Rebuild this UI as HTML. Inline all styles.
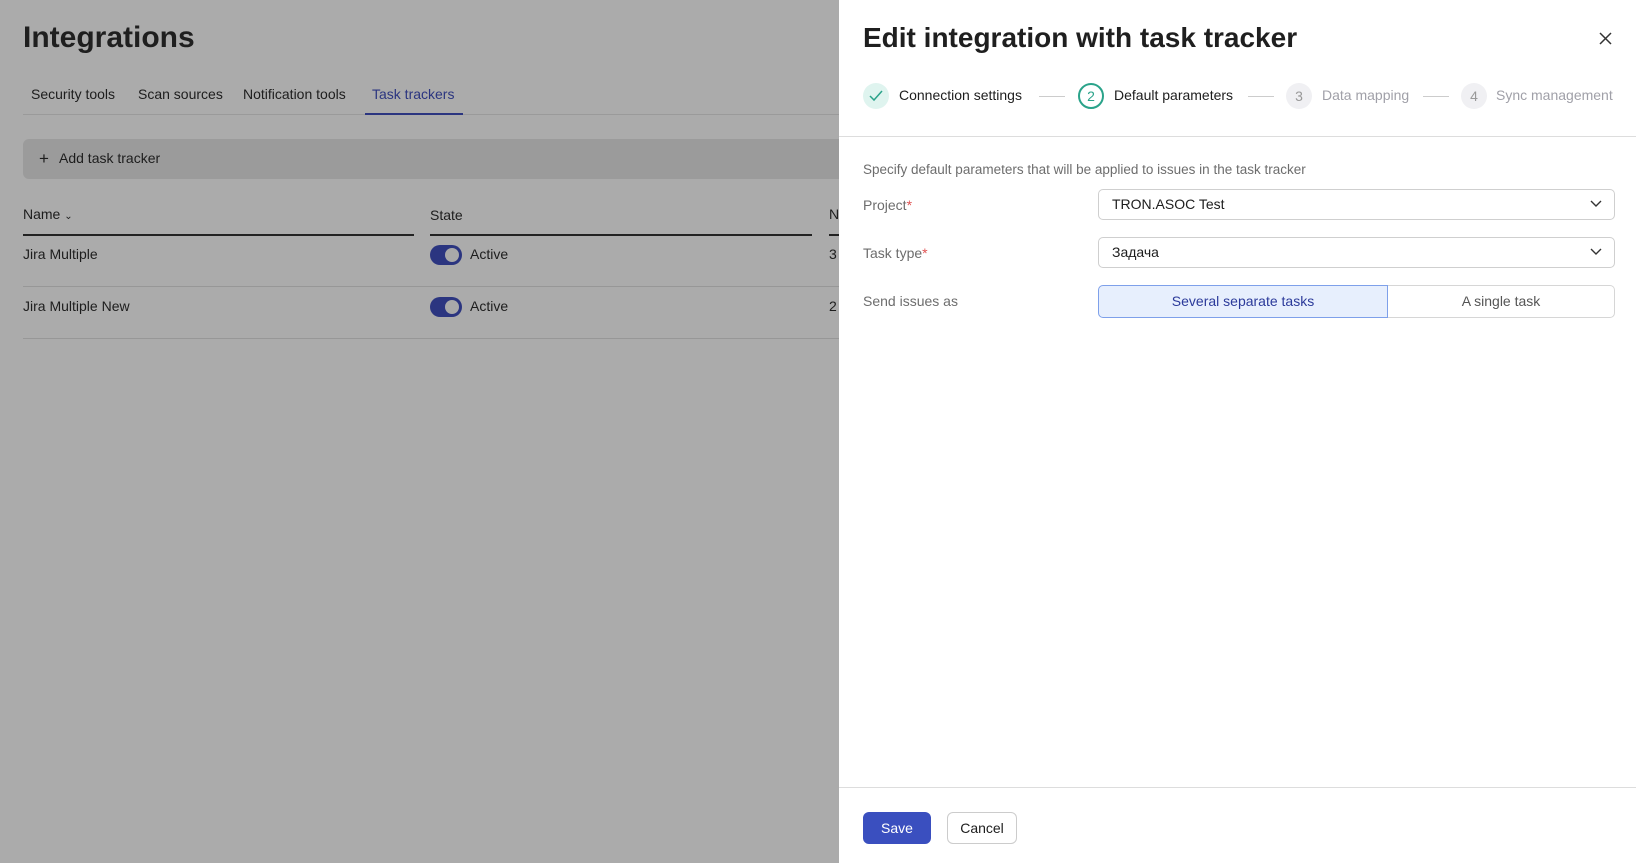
<!DOCTYPE html>
<html><head><meta charset="utf-8"><style>
*{box-sizing:border-box;margin:0;padding:0}
body{width:1636px;height:863px;position:relative;overflow:hidden;font-family:"Liberation Sans","Noto Sans CJK SC",sans-serif;background:#ababab;color:#1d1d1d;font-size:14px}
.a{position:absolute;white-space:nowrap}
.l{position:absolute;height:1px}
.tg{position:absolute;width:32px;height:20px;border-radius:10px;background:#2b3580}
.tg:after{content:"";position:absolute;right:3px;top:3px;width:14px;height:14px;border-radius:50%;background:#a9a9a9}
.panel{position:absolute;left:839px;top:0;width:797px;height:863px;background:#fff}
.c{position:absolute;width:26px;height:26px;border-radius:50%;top:83px;text-align:center;line-height:26px;font-size:14px}
.sel{position:absolute;left:259px;width:517px;height:31px;border:1px solid #cfcfcf;border-radius:5px;padding-left:13px;line-height:29px;font-size:14px}
.sel svg{position:absolute;right:12px;top:10px}
</style></head><body>
<div class="a" style="left:23px;top:21px;font-size:30px;font-weight:600;color:#1f1f1f">Integrations</div>
<div class="a" style="left:31px;top:86px;font-size:14px;color:#1d1d1d">Security tools</div>
<div class="a" style="left:138px;top:86px;font-size:14px">Scan sources</div>
<div class="a" style="left:243px;top:86px;font-size:14px">Notification tools</div>
<div class="a" style="left:372px;top:86px;font-size:14px;color:#2b3580">Task trackers</div>
<div class="l" style="left:23px;top:114px;width:816px;background:#9a9a9a"></div>
<div class="l" style="left:365px;top:113px;width:98px;height:2px;background:#2b3580"></div>
<div class="a" style="left:23px;top:139px;width:816px;height:40px;background:#9b9b9b;border-radius:6px 0 0 6px"></div>
<div class="a" style="left:39px;top:150px;font-size:17px;line-height:17px">+</div>
<div class="a" style="left:59px;top:150px;font-size:14px">Add task tracker</div>
<div class="a" style="left:23px;top:206px">Name <span style="font-size:10px">&#8964;</span></div>
<div class="a" style="left:430px;top:207px">State</div>
<div class="a" style="left:829px;top:206px">N</div>
<div class="l" style="left:23px;top:234px;width:391px;height:2px;background:#222"></div>
<div class="l" style="left:430px;top:234px;width:382px;height:2px;background:#222"></div>
<div class="l" style="left:829px;top:234px;width:10px;height:2px;background:#222"></div>
<div class="a" style="left:23px;top:246px">Jira Multiple</div>
<div class="tg" style="left:430px;top:245px"></div>
<div class="a" style="left:470px;top:246px">Active</div>
<div class="a" style="left:829px;top:246px">3</div>
<div class="l" style="left:23px;top:286px;width:816px;background:#979797"></div>
<div class="a" style="left:23px;top:298px">Jira Multiple New</div>
<div class="tg" style="left:430px;top:297px"></div>
<div class="a" style="left:470px;top:298px">Active</div>
<div class="a" style="left:829px;top:298px">2</div>
<div class="l" style="left:23px;top:338px;width:816px;background:#979797"></div>

<div class="panel">
<div class="a" style="left:24px;top:22px;font-size:28px;font-weight:600;color:#1f1f1f">Edit integration with task tracker</div>
<svg class="a" style="left:760px;top:32px" width="13" height="13" viewBox="0 0 13 13"><path d="M1 1L12 12M12 1L1 12" stroke="#333" stroke-width="1.5"/></svg>
<div class="c" style="left:24px;background:#dff4ef"><svg width="14" height="12" viewBox="0 0 14 12" style="margin-top:7px"><path d="M1 6l4 4 8-9" fill="none" stroke="#2aa38a" stroke-width="1.5"/></svg></div>
<div class="a" style="left:60px;top:87px;color:#1d1d1d">Connection settings</div>
<div class="l" style="left:200px;top:96px;width:26px;background:#ccc"></div>
<div class="c" style="left:239px;border:2px solid #2aa38a;line-height:22px;color:#2aa38a">2</div>
<div class="a" style="left:275px;top:87px">Default parameters</div>
<div class="l" style="left:409px;top:96px;width:26px;background:#ccc"></div>
<div class="c" style="left:447px;background:#f0f0f3;color:#999">3</div>
<div class="a" style="left:483px;top:87px;color:#a0a0a8">Data mapping</div>
<div class="l" style="left:584px;top:96px;width:26px;background:#ccc"></div>
<div class="c" style="left:622px;background:#f0f0f3;color:#999">4</div>
<div class="a" style="left:657px;top:87px;color:#a0a0a8">Sync management</div>
<div class="l" style="left:0;top:136px;width:797px;background:#ddd"></div>
<div class="a" style="left:24px;top:162px;font-size:13.5px;color:#6d6d6d">Specify default parameters that will be applied to issues in the task tracker</div>
<div class="a" style="left:24px;top:197px;color:#6d6d6d">Project<span style="color:#e05353">*</span></div>
<div class="sel" style="top:189px">TRON.ASOC Test<svg width="12" height="8" viewBox="0 0 12 8"><path d="M1 1l5 5 5-5" fill="none" stroke="#333" stroke-width="1.4"/></svg></div>
<div class="a" style="left:24px;top:245px;color:#6d6d6d">Task type<span style="color:#e05353">*</span></div>
<div class="sel" style="top:237px">Задача<svg width="12" height="8" viewBox="0 0 12 8"><path d="M1 1l5 5 5-5" fill="none" stroke="#333" stroke-width="1.4"/></svg></div>
<div class="a" style="left:24px;top:293px;color:#6d6d6d">Send issues as</div>
<div class="a" style="left:259px;top:285px;width:290px;height:33px;background:#e7effd;border:1px solid #7ea0ea;border-radius:5px 0 0 5px;text-align:center;line-height:31px;color:#2b3a9a">Several separate tasks</div>
<div class="a" style="left:549px;top:285px;width:227px;height:33px;border:1px solid #d6d6d6;border-left:none;border-radius:0 5px 5px 0;text-align:center;line-height:31px;color:#555">A single task</div>
<div class="l" style="left:0;top:787px;width:797px;background:#ddd"></div>
<div class="a" style="left:24px;top:812px;width:68px;height:32px;background:#3a4fbf;border-radius:6px;color:#fff;text-align:center;line-height:32px">Save</div>
<div class="a" style="left:108px;top:812px;width:70px;height:32px;border:1px solid #ccc;border-radius:6px;text-align:center;line-height:30px">Cancel</div>
</div>
</body></html>
